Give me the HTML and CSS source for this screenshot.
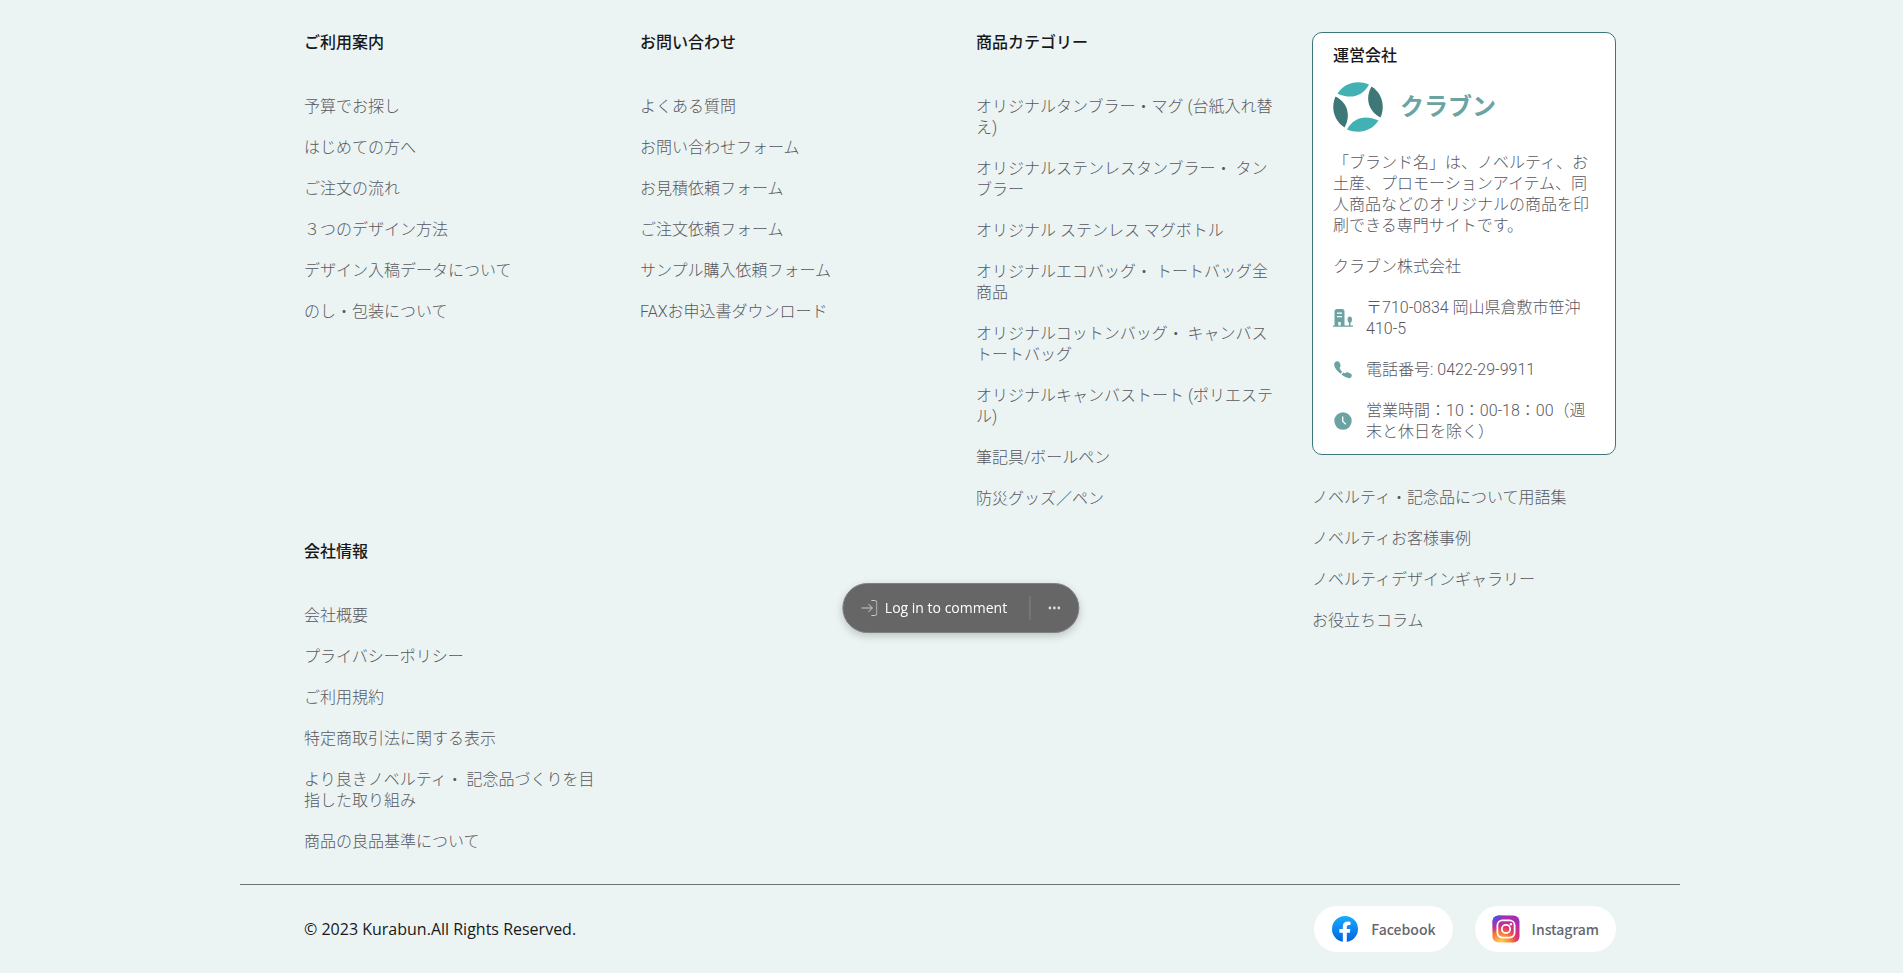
FILE: index.html
```html
<!DOCTYPE html>
<html lang="ja">
<head>
<meta charset="utf-8">
<meta name="viewport" content="width=device-width, initial-scale=1">
<title>クラブン</title>
<link rel="stylesheet" href="styles.css">
</head>
<body>
<footer class="footer">
  <div class="footer-grid">
    <nav class="column" aria-labelledby="guide">
      <h2 class="heading" id="guide">ご利用案内</h2>
      <ul class="links">
        <li><a href="#">予算でお探し</a></li>
        <li><a href="#">はじめての方へ</a></li>
        <li><a href="#">ご注文の流れ</a></li>
        <li><a href="#">３つのデザイン方法</a></li>
        <li><a href="#">デザイン入稿データについて</a></li>
        <li><a href="#">のし・包装について</a></li>
      </ul>
    </nav>
    <nav class="column" aria-labelledby="contact">
      <h2 class="heading" id="contact">お問い合わせ</h2>
      <ul class="links">
        <li><a href="#">よくある質問</a></li>
        <li><a href="#">お問い合わせフォーム</a></li>
        <li><a href="#">お見積依頼フォーム</a></li>
        <li><a href="#">ご注文依頼フォーム</a></li>
        <li><a href="#">サンプル購入依頼フォーム</a></li>
        <li><a href="#">FAXお申込書ダウンロード</a></li>
      </ul>
    </nav>
    <nav class="column" aria-labelledby="category">
      <h2 class="heading" id="category">商品カテゴリー</h2>
      <ul class="links">
        <li><a href="#">オリジナルタンブラー・マグ (台紙入れ替え)</a></li>
        <li><a href="#">オリジナルステンレスタンブラー・ タンブラー</a></li>
        <li><a href="#">オリジナル ステンレス マグボトル</a></li>
        <li><a href="#">オリジナルエコバッグ・ トートバッグ全商品</a></li>
        <li><a href="#">オリジナルコットンバッグ・ キャンバストートバッグ</a></li>
        <li><a href="#">オリジナルキャンバストート (ポリエステル)</a></li>
        <li><a href="#">筆記具/ボールペン</a></li>
        <li><a href="#">防災グッズ／ペン</a></li>
      </ul>
    </nav>
    <div class="column company">
      <section class="card" aria-labelledby="operator">
        <h2 class="heading" id="operator">運営会社</h2>
        <div class="brand">
          <svg class="brand-mark" viewBox="0 0 50 50" aria-hidden="true">
            <path fill="#42b1b4" d="M4.500 11.500C11 1 24-2.500 36 2.500C30 14 18 18 4.500 11.500Z"/>
            <path fill="#3d7777" d="M38.500 4.500C49 11 52.500 24 47.500 35.500C36 30 31.500 17 38.500 4.500Z"/>
            <path fill="#42b1b4" d="M45.500 38.500C39 49 26 52.500 14 47.500C20 36 32 32 45.500 38.500Z"/>
            <path fill="#3d7777" d="M2.500 14.500C14 20 18.500 33 11.500 45.500C1 39-2.500 26 2.500 14.500Z"/>
          </svg>
          <span class="brand-name">クラブン</span>
        </div>
        <div class="details">
          <p>「ブランド名」は、ノベルティ、お土産、プロモーションアイテム、同人商品などのオリジナルの商品を印刷できる専門サイトです。</p>
          <p>クラブン株式会社</p>
          <div class="detail">
            <svg class="icon" viewBox="0 0 20 20" aria-hidden="true">
              <path fill="currentColor" fill-rule="evenodd" d="M1.500 17.500V3.500Q1.500 1 4 1H9Q11.500 1 11.500 3.500V17.500H16V14.500Q14.500 14 14.500 11.500Q14.500 8.500 16.800 8.500Q19 8.500 19 11.500Q19 14 17.500 14.500V17.500H20V18.700H0V17.500ZM4 4.500V5.700H9V4.500ZM4 8V9.200H9V8ZM5.300 17.500H7.700V14H5.300Z"/>
            </svg>
            <p>〒710-0834 岡山県倉敷市笹沖410-5</p>
          </div>
          <div class="detail">
            <svg class="icon" viewBox="0 0 20 20" aria-hidden="true">
              <path fill="currentColor" d="M2 2.300C3.500.9 5.500.8 6.500 2.500L7.300 4.200C8 5.500 7.500 6.500 6.700 7.500C6.300 8.600 8 10.500 9.200 11.700L7.500 13.700C4 10.800 1.200 7.500 1.200 4.700C1.200 3.700 1.400 2.900 2 2.300ZM8.500 14.500L10.300 12.600C11.500 13.500 12 13.300 13 12.700C14 12 15 12.100 16 12.700L17.800 13.700C19.300 14.700 19.100 16.300 17.900 17.500C16 19.200 12 17.300 8.500 14.500Z"/>
            </svg>
            <p>電話番号: 0422-29-9911</p>
          </div>
          <div class="detail">
            <svg class="icon" viewBox="0 0 20 20" aria-hidden="true">
              <circle cx="10" cy="10" r="8.700" fill="currentColor"/>
              <path fill="none" stroke="#fff" stroke-width="1.300" d="M9.700 5.500V10.200L12.800 13.200"/>
            </svg>
            <p>営業時間：10：00-18：00（週末と休日を除く）</p>
          </div>
        </div>
      </section>
      <ul class="links">
        <li><a href="#">ノベルティ・記念品について用語集</a></li>
        <li><a href="#">ノベルティお客様事例</a></li>
        <li><a href="#">ノベルティデザインギャラリー</a></li>
        <li><a href="#">お役立ちコラム</a></li>
      </ul>
    </div>
    <nav class="column" aria-labelledby="about">
      <h2 class="heading" id="about">会社情報</h2>
      <ul class="links">
        <li><a href="#">会社概要</a></li>
        <li><a href="#">プライバシーポリシー</a></li>
        <li><a href="#">ご利用規約</a></li>
        <li><a href="#">特定商取引法に関する表示</a></li>
        <li><a href="#">より良きノベルティ・ 記念品づくりを目指した取り組み</a></li>
        <li><a href="#">商品の良品基準について</a></li>
      </ul>
    </nav>
  </div>
  <div class="bottom-bar">
    <p class="copyright">© 2023 Kurabun.All Rights Reserved.</p>
    <div class="social">
      <a class="social-link" href="#">
        <svg class="social-icon" viewBox="0 0 28 28" aria-hidden="true">
          <defs><linearGradient id="fb" x1="0" y1="0" x2="0" y2="1"><stop offset="0" stop-color="#18acfe"/><stop offset="1" stop-color="#0163e0"/></linearGradient></defs>
          <circle cx="14" cy="14" r="13" fill="url(#fb)"/>
          <path fill="#fff" d="M11.800 27V17.800H8.400V14H11.800V11.400C11.800 8 13.800 6.400 16.700 6.400C18.100 6.400 19.500 6.700 19.500 6.700V9.900H17.900C16.300 9.900 15.800 10.900 15.800 11.900V14H19.400L18.800 17.800H15.800V27Z"/>
        </svg>
        Facebook
      </a>
      <a class="social-link" href="#">
        <svg class="social-icon" viewBox="0 0 28 28" aria-hidden="true">
          <defs>
            <radialGradient id="ig-warm" cx=".3" cy="1.050" r="1"><stop offset="0" stop-color="#ffdc80"/><stop offset=".2" stop-color="#fcaf45"/><stop offset=".42" stop-color="#f77737"/><stop offset=".65" stop-color="#e1306c"/><stop offset="1" stop-color="#a82bb5"/></radialGradient>
            <radialGradient id="ig-cool" cx="0" cy="0" r=".65"><stop offset="0" stop-color="#3f5fe0"/><stop offset=".3" stop-color="#6746d5"/><stop offset="1" stop-color="#b52ba8" stop-opacity="0"/></radialGradient>
          </defs>
          <rect x=".5" y=".5" width="27" height="27" rx="6" fill="url(#ig-warm)"/>
          <rect x=".5" y=".5" width="27" height="27" rx="6" fill="url(#ig-cool)"/>
          <g fill="none" stroke="#fff" stroke-width="1.800"><rect x="5.400" y="5.400" width="17.200" height="17.200" rx="5"/><circle cx="14" cy="14" r="4.200"/></g>
          <circle cx="18.900" cy="9.200" r="1.200" fill="#fff"/>
        </svg>
        Instagram
      </a>
    </div>
  </div>
</footer>
<div class="comment-bar">
  <button class="login" type="button">
    <svg class="login-icon" viewBox="0 0 16 16" aria-hidden="true"><path fill="none" stroke="currentColor" d="M0 8H11M7 4L11 8L7 12M10 .5H13.500Q15.500.5 15.500 2.500V13.500Q15.500 15.500 13.500 15.500H10"/></svg>
    Log in to comment
  </button>
  <button class="more" type="button" aria-label="More">
    <svg class="more-icon" viewBox="0 0 12 4" aria-hidden="true"><g fill="currentColor"><circle cx="1.500" cy="2" r="1.400"/><circle cx="6" cy="2" r="1.400"/><circle cx="10.500" cy="2" r="1.400"/></g></svg>
  </button>
</div>
</body>
</html>
```

FILE: styles.css
```css
* {
  box-sizing: border-box;
}

body {
  margin: 0;
  padding-left: 17px;
  background: #ebf4f3;
  color: #58585f;
  font-family: Roboto, "Noto Sans CJK JP", sans-serif;
  font-size: 16px;
  font-weight: 300;
  line-height: 21px;
}

h2,
p,
ul {
  margin: 0;
  padding: 0;
}

ul {
  list-style: none;
}

a {
  color: inherit;
  text-decoration: none;
}

.footer {
  max-width: 1440px;
  margin: 0 auto;
}

.footer-grid {
  display: grid;
  grid-template-columns: repeat(4, minmax(0, 1fr));
  grid-template-rows: auto 1fr;
  gap: 32px;
  padding: 32px 64px;
}

.heading {
  color: #18181b;
  font-size: 16px;
  font-weight: 500;
}

.column > .heading {
  margin-bottom: 43px;
}

.links,
.details {
  display: flex;
  flex-direction: column;
  gap: 20px;
}

.company {
  display: flex;
  flex-direction: column;
  grid-row: span 2;
  gap: 32px;
}

.card {
  padding: 12px 20px;
  border: 1px solid #3d7777;
  border-radius: 10px;
  background: #fff;
}

.brand {
  display: flex;
  align-items: center;
  gap: 17px;
  margin: 16px 0 20px;
}

.brand-mark {
  width: 50px;
  height: 50px;
}

.brand-name {
  color: #6ba3a3;
  font-size: 24px;
  font-weight: 700;
}

.detail {
  display: flex;
  align-items: center;
  gap: 13px;
}

.icon {
  flex: none;
  width: 20px;
  height: 20px;
  color: #6ba3a3;
}

.bottom-bar {
  display: flex;
  align-items: center;
  justify-content: space-between;
  padding: 21px 64px;
  border-top: 1px solid #71717a;
}

.copyright {
  color: #18181b;
  font-family: "Open Sans", sans-serif;
  font-weight: 400;
}

.social {
  display: flex;
  gap: 22px;
}

.social-link {
  display: flex;
  align-items: center;
  gap: 12px;
  height: 46px;
  padding: 0 17px;
  border-radius: 23px;
  background: #fff;
  color: #66666e;
  font-family: "Noto Sans CJK JP", sans-serif;
  font-size: 14px;
  font-weight: 500;
}

.social-icon {
  width: 28px;
  height: 28px;
}

.comment-bar {
  position: fixed;
  top: 583px;
  left: calc(50% + 9px);
  display: flex;
  align-items: center;
  height: 50px;
  border: 1px solid #808080;
  border-radius: 25px;
  background: #666;
  box-shadow: 0 3px 8px rgba(0, 0, 0, 0.2);
  transform: translateX(-50%);
}

.login,
.more {
  display: flex;
  align-items: center;
  border: 0;
  background: none;
  color: #fff;
  font: 14px/20px "Open Sans", sans-serif;
}

.login {
  gap: 8px;
  padding: 0 22px 0 18px;
  white-space: nowrap;
}

.login-icon {
  width: 16px;
  height: 16px;
  color: #ccc;
}

.more {
  height: 24px;
  padding: 0 18px;
  border-left: 1px solid #858585;
}

.more-icon {
  width: 12px;
  height: 4px;
  color: #ddd;
}
```
